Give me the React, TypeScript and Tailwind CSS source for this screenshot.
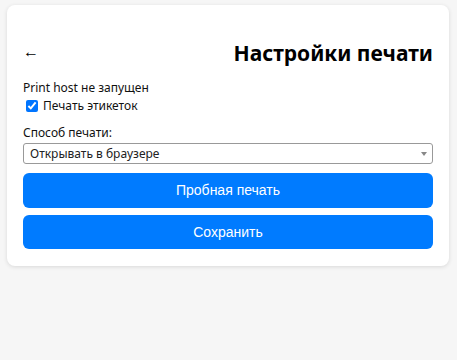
import { useState } from "react";

const METHODS = ["Открывать в браузере", "Печатать через Print host"];

export default function App() {
  const [labels, setLabels] = useState(true);
  const [method, setMethod] = useState(METHODS[0]);

  return (
    <div className="min-h-screen bg-[#f6f6f6] pt-[5px] px-[7px] pr-[8px] font-['Noto_Sans',sans-serif] text-[#111]">
      <div className="bg-white rounded-lg shadow-[0_1px_4px_rgba(0,0,0,0.12)] px-4 pt-[26px] pb-[17px]">
        <div className="flex items-center justify-between h-[44px]">
          <button className="text-[16px] leading-none pb-[4px] text-black">←</button>
          <h2 className="text-[21px] font-bold text-black leading-none">Настройки печати</h2>
        </div>

        <div className="mt-[5px] text-[12px] leading-[16px]">Print host не запущен</div>
        <label className="flex items-center gap-[5px] mt-[2px] ml-[3px] text-[12px] leading-[16px]">
          <input
            type="checkbox"
            checked={labels}
            onChange={(e) => setLabels(e.target.checked)}
            className="w-[12px] h-[12px] accent-[#0075ff]"
          />
          Печать этикеток
        </label>

        <div className="mt-[11px] text-[12px] leading-[16px]">Способ печати:</div>
        <div className="relative mt-[2px]">
          <select
            value={method}
            onChange={(e) => setMethod(e.target.value)}
            className="block w-full h-[21px] appearance-none border border-[#999] rounded-[3px] bg-white pl-[6px] text-[12px] leading-[16px] text-[#222]"
          >
            {METHODS.map((m) => (
              <option key={m} value={m}>{m}</option>
            ))}
          </select>
          <span className="pointer-events-none absolute right-[6px] top-[9px] w-0 h-0 border-l-[3px] border-r-[3px] border-t-[4px] border-l-transparent border-r-transparent border-t-[#888]" />
        </div>

        <div className="mt-[9px] flex flex-col gap-[7px] font-['Liberation_Sans',Arial,sans-serif]">
          <button className="h-[35px] w-full rounded-[6px] bg-[#007bff] text-white text-[14px]">Пробная печать</button>
          <button className="h-[34px] w-full rounded-[6px] bg-[#007bff] text-white text-[14px]">Сохранить</button>
        </div>
      </div>
    </div>
  );
}
